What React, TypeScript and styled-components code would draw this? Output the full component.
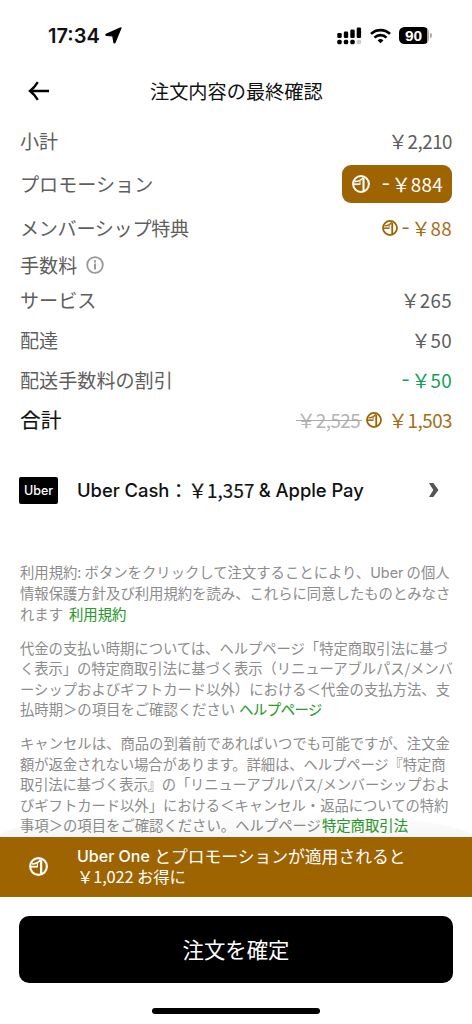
import React from "react";
import styled, { createGlobalStyle } from "styled-components";

const BROWN = "#9f6402";
const GOLD = "#a66d17";
const JP = `"Noto Sans CJK JP", sans-serif`;
const LATIN = `Inter, "Noto Sans CJK JP", sans-serif`;

const Global = createGlobalStyle`
  * { box-sizing: border-box; }
  body { margin: 0; background: #fff; }
`;

const Screen = styled.div`
  width: 472px;
  height: 1024px;
  overflow: hidden;
  display: flex;
  flex-direction: column;
  background: #fff;
  color: #111;
  font-family: ${JP};
  text-spacing-trim: space-all;
  white-space: nowrap;
`;

const StatusBar = styled.div`
  height: 70px;
  flex: none;
  display: flex;
  justify-content: space-between;
  align-items: center;
  padding: 1px 40px 0 48px;
`;

const Clock = styled.div`
  display: flex;
  align-items: center;
  gap: 5px;
  font: 600 20px/24px ${LATIN};
  letter-spacing: 0;
`;

const StatusIcons = styled.div`
  display: flex;
  align-items: center;
`;

const WifiIcon = styled.svg`
  margin: 0 8px 0 8px;
`;

const Battery = styled.div`
  width: 30px;
  height: 17px;
  border-radius: 5.5px;
  background: linear-gradient(90deg, #000 28px, #aaa 28px);
  color: #fff;
  font: 700 15.5px/17px "Liberation Sans", Arial, sans-serif;
  text-align: center;
  padding-right: 1px;
`;

const BatteryCap = styled.div`
  width: 2px;
  height: 5px;
  margin-left: 1px;
  border-radius: 0 2px 2px 0;
  background: #aaa;
`;

const Header = styled.header`
  height: 51px;
  flex: none;
  display: grid;
  grid-template-columns: 122px 1fr 122px;
  align-items: center;
  padding: 0 28px;
  padding-bottom: 10px;
`;

const Title = styled.h1`
  margin: 0;
  font-size: 19.2px;
  line-height: 26px;
  font-weight: 400;
`;

const Row = styled.div<{ $h: number }>`
  height: ${(p) => p.$h}px;
  flex: none;
  display: flex;
  align-items: center;
  justify-content: space-between;
  padding: 0 20px;
`;

const Label = styled.span<{ $total?: boolean; $spacing?: number }>`
  display: flex;
  align-items: center;
  gap: 9px;
  color: ${(p) => (p.$total ? "#111" : "#5e5e5e")};
  font-size: ${(p) => (p.$total ? 20.8 : 19.1)}px;
  line-height: 26px;
  letter-spacing: ${(p) => p.$spacing ?? 0}px;
  padding-bottom: 1px;
  ${(p) => p.$total && `-webkit-text-stroke: 0.15px currentColor; padding-bottom: 2px;`}
`;

const Values = styled.span`
  display: flex;
  align-items: center;
`;

const TotalValues = styled(Values)`
  gap: 6px;
`;

const Price = styled.span<{ $color?: string; $struck?: boolean; $spacing: number }>`
  display: flex;
  align-items: center;
  position: relative;
  color: ${(p) => p.$color ?? "#5e5e5e"};
  font-size: 18.8px;
  line-height: 26px;
  padding-bottom: 1px;
  letter-spacing: ${(p) => p.$spacing}px;
  ${(p) =>
    p.$struck &&
    `&::after { content: ""; position: absolute; left: 0; right: -2px; top: 13px; height: 1px; background: #aaa; }`}
`;

const Minus = styled.span`
  font-family: ${LATIN};
  margin-right: 1px;
`;

const Yen = styled.span`
  font-size: 19.4px;
  letter-spacing: 0;
`;

const Promo = styled.span`
  width: 110px;
  height: 38px;
  border-radius: 9px;
  background: ${BROWN};
  display: flex;
  align-items: center;
  justify-content: space-between;
  padding: 0 9px 0 10px;
`;

const Payment = styled.div`
  height: 60px;
  flex: none;
  margin-top: 20px;
  display: flex;
  align-items: center;
  padding: 0 20px 0 19px;
`;

const UberCard = styled.div`
  width: 39px;
  height: 27px;
  border-radius: 2px;
  background: #000;
  color: #fff;
  font: 500 12.5px/27px ${LATIN};
  text-align: center;
  margin-right: 19px;
`;

const PaymentText = styled.div`
  flex: 1;
  display: flex;
  align-items: center;
  font: 500 18.4px/26px ${LATIN};
  letter-spacing: -0.05px;
`;

const Figures = styled.span<{ $size: number; $spacing?: number; $stroke?: number }>`
  font-family: ${JP};
  font-weight: 400;
  font-size: ${(p) => p.$size}px;
  letter-spacing: ${(p) => p.$spacing ?? 0}px;
  white-space: pre;
  -webkit-text-stroke: ${(p) => p.$stroke ?? 0}px currentColor;
`;

const Legal = styled.section`
  flex: 1;
  min-height: 0;
  padding: 41.5px 0 0 20px;
  display: flex;
  flex-direction: column;
  gap: 13.6px;
`;

const Paragraph = styled.p`
  margin: 0;
  color: #8c8c8c;
  font-size: 14.35px;
  line-height: 20.5px;
`;

const Line = styled.span<{ $spacing?: number }>`
  display: block;
  letter-spacing: ${(p) => p.$spacing ?? 0}px;
`;

const Latin = styled.span`
  font-family: ${LATIN};
`;

const Link = styled.a<{ $gap?: number; $spacing?: number }>`
  color: #2a9a2a;
  -webkit-text-stroke: 0.1px currentColor;
  margin-left: ${(p) => p.$gap ?? 0}px;
  letter-spacing: ${(p) => p.$spacing ?? 0}px;
`;

const Footer = styled.footer`
  position: relative;
  flex: none;
  height: 187px;
  display: flex;
  flex-direction: column;
  align-items: center;
  &::before {
    content: "";
    position: absolute;
    left: 0;
    right: 0;
    bottom: 100%;
    height: 25px;
    border-radius: 50% 50% 0 0 / 100% 100% 0 0;
    background: linear-gradient(rgba(0, 0, 0, 0), rgba(0, 0, 0, 0.04));
  }
`;

const Savings = styled.div`
  width: 100%;
  height: 60px;
  flex: none;
  display: flex;
  align-items: center;
  gap: 29px;
  padding: 0 0 1px 29px;
  background: ${BROWN};
  color: #fff;
`;

const SavingsText = styled.div`
  font: 500 16px/20px ${LATIN};
  padding-bottom: 1px;
`;

const SavingsLine = styled.div`
  height: 20px;
  display: flex;
  align-items: center;
`;

const Confirm = styled.button`
  width: 434px;
  height: 67px;
  margin-top: 19px;
  padding: 0 0 2px;
  border: 0;
  border-radius: 10px;
  background: #000;
  color: #fff;
  font: 400 21.4px/30px ${JP};
  flex: none;
`;

const HomeBar = styled.div`
  width: 168px;
  height: 6px;
  border-radius: 3px;
  background: #000;
  margin-top: 25px;
`;

const OneIcon = ({ size, color }: { size: number; color: string }) => (
  <svg width={size} height={size} viewBox="0 0 18 18" fill="none" stroke={color} strokeWidth="2">
    <circle cx="9" cy="9" r="7.9" />
    <path d="M11.500 3v12.800" strokeWidth="2.100" />
    <path d="M1.500 9.200h6.300" strokeWidth="1.700" />
    <path d="M2.800 6.600Q8.800 6.200 10.900 2.600" strokeWidth="1.500" />
    <path d="M8 9.800V6" strokeWidth="1" />
  </svg>
);

type AmountProps = { value: string; minus?: boolean; $color?: string; $struck?: boolean };

const Amount = ({ value, minus, ...rest }: AmountProps) => (
  <Price {...rest} $spacing={value.includes(",") ? -0.5 : 0.3}>
    {minus && <Minus>-</Minus>}
    <Yen>￥</Yen>
    {value}
  </Price>
);

export default function App() {
  return (
    <Screen>
      <Global />
      <StatusBar>
        <Clock>
          17:34
          <svg width="17" height="17" viewBox="0 0 17 17">
            <path d="M15.900 1 1.200 7.500q-.6.500.2.800l6.500.500 1.100 6.600q.4.900.9.100z" stroke="#000" strokeWidth="1.400" strokeLinejoin="round" />
          </svg>
        </Clock>
        <StatusIcons>
          <svg width="25" height="18" viewBox="0 0 25 18">
            <rect x=".3" y="6" width="4.4" height="5" rx="1.3" />
            <rect x="6.8" y="4.6" width="4.4" height="6.4" rx="1.3" />
            <rect x="13.3" y="2.6" width="4.4" height="8.4" rx="1.3" />
            <rect x="19.7" y=".5" width="4.4" height="10.5" rx="1.3" />
            <rect x=".3" y="12.8" width="4.4" height="4.4" rx="1.5" />
            <rect x="6.8" y="12.8" width="4.4" height="4.4" rx="1.5" />
            <rect x="13.3" y="12.8" width="4.4" height="4.4" rx="1.5" />
            <rect x="19.7" y="12.8" width="4.4" height="4.4" rx="1.5" fill="#ccc" />
          </svg>
          <WifiIcon width="21" height="16" viewBox="0 0 21 16" fill="none" stroke="#000" strokeWidth="2.7">
            <path d="M1 5.9a13.6 13.6 0 0 1 19 0" />
            <path d="M4.5 9.6a8.6 8.6 0 0 1 12 0" />
            <path d="M10.5 15.2 7.6 12.4a4.2 4.2 0 0 1 5.8 0z" fill="#000" stroke="none" />
          </WifiIcon>
          <Battery>90</Battery>
          <BatteryCap />
        </StatusIcons>
      </StatusBar>
      <Header>
        <svg width="22" height="20" viewBox="0 0 22 20" fill="none" stroke="#000" strokeWidth="2.3">
          <path d="M21 10H2.5M9.8 1.2Q6.600 6.500 2 10q4.600 3.500 7.800 8.800" />
        </svg>
        <Title>注文内容の最終確認</Title>
      </Header>

      <Row $h={40}>
        <Label>小計</Label>
        <Amount value="2,210" />
      </Row>
      <Row $h={46}>
        <Label>プロモーション</Label>
        <Promo>
          <OneIcon size={18} color="#fff" />
          <Amount minus value="884" $color="#fff" />
        </Promo>
      </Row>
      <Row $h={42}>
        <Label $spacing={-0.3}>メンバーシップ特典</Label>
        <Values>
          <OneIcon size={16} color={BROWN} />
          &nbsp;
          <Amount minus value="88" $color={GOLD} />
        </Values>
      </Row>
      <Row $h={32}>
        <Label>
          手数料
          <svg width="18" height="18" viewBox="0 0 18 18" fill="none" stroke="#999" strokeWidth="1.8">
            <circle cx="9" cy="9" r="7.800" />
            <path d="M9 7.600v6M9 4.200v2.200" strokeWidth="2" />
          </svg>
        </Label>
      </Row>
      <Row $h={39}>
        <Label>サービス</Label>
        <Amount value="265" />
      </Row>
      <Row $h={40}>
        <Label>配達</Label>
        <Amount value="50" />
      </Row>
      <Row $h={40}>
        <Label>配送手数料の割引</Label>
        <Amount minus value="50" $color="#14a05a" />
      </Row>
      <Row $h={40}>
        <Label $total>合計</Label>
        <TotalValues>
          <Amount value="2,525" $color="#b4b4b4" $struck />
          <OneIcon size={16} color={BROWN} />
          <Amount value="1,503" $color={GOLD} />
        </TotalValues>
      </Row>

      <Payment>
        <UberCard>Uber</UberCard>
        <PaymentText>
          Uber Cash
          <Figures $size={18.8} $spacing={0.1} $stroke={0.2}>：￥1,357 </Figures>
          &amp; Apple Pay
        </PaymentText>
        <svg width="24" height="18" viewBox="0 0 24 18" fill="#555">
          <path d="M1 2h4.300l5.200 7-5.200 7H1l4.300-7z" />
        </svg>
      </Payment>

      <Legal>
        <Paragraph>
          <Line>利用規約: ボタンをクリックして注文することにより、<Latin>Uber</Latin> の個人</Line>
          <Line>情報保護方針及び利用規約を読み、これらに同意したものとみなさ</Line>
          <Line>れます<Link $gap={6}>利用規約</Link></Line>
        </Paragraph>
        <Paragraph>
          <Line $spacing={-0.05}>代金の支払い時期については、ヘルプページ「特定商取引法に基づ</Line>
          <Line $spacing={-0.08}>く表示」の特定商取引法に基づく表示（リニューアブルパス/メンバ</Line>
          <Line>ーシップおよびギフトカード以外）における＜代金の支払方法、支</Line>
          <Line>払時期＞の項目をご確認ください<Link $gap={4} $spacing={-0.5}>ヘルプページ</Link></Line>
        </Paragraph>
        <Paragraph>
          <Line>キャンセルは、商品の到着前であればいつでも可能ですが、注文金</Line>
          <Line $spacing={-0.1}>額が返金されない場合があります。詳細は、ヘルプページ『特定商</Line>
          <Line $spacing={-0.17}>取引法に基づく表示』の「リニューアブルパス/メンバーシップおよ</Line>
          <Line $spacing={-0.05}>びギフトカード以外」における＜キャンセル・返品についての特約</Line>
          <Line>事項＞の項目をご確認ください。ヘルプページ<Link $gap={1}>特定商取引法</Link></Line>
        </Paragraph>
      </Legal>

      <Footer>
        <Savings>
          <OneIcon size={19} color="#fff" />
          <SavingsText>
            <SavingsLine>
              Uber One&nbsp;
              <Figures $size={16.8}>とプロモーションが適用されると</Figures>
            </SavingsLine>
            <SavingsLine>
              <Figures $size={16.4} $spacing={-0.15}>￥1,022 お得に</Figures>
            </SavingsLine>
          </SavingsText>
        </Savings>
        <Confirm>注文を確定</Confirm>
        <HomeBar />
      </Footer>
    </Screen>
  );
}
